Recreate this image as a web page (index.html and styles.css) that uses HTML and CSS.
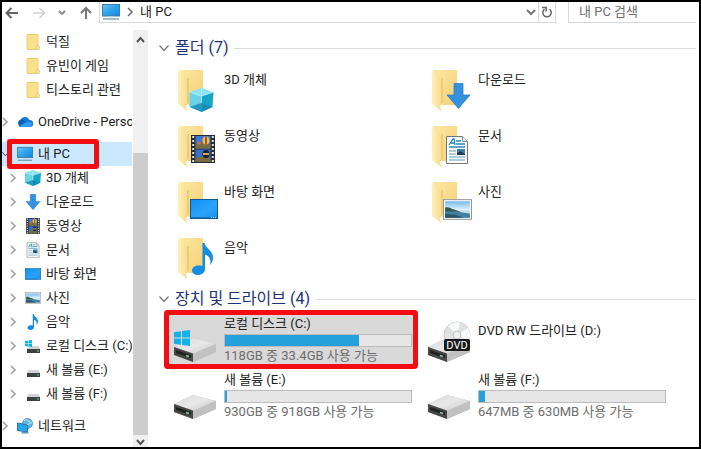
FILE: index.html
```html
<!DOCTYPE html>
<html lang="ko">
<head>
<meta charset="utf-8">
<meta name="viewport" content="width=device-width, initial-scale=1">
<title>내 PC</title>
<link rel="stylesheet" href="styles.css">
</head>
<body>
<svg class="defs" aria-hidden="true">
  <defs>
    <linearGradient id="blue" x1="0" y1="0" x2="1" y2="1"><stop offset="0" stop-color="#6cc4f5"/><stop offset=".5" stop-color="#2fa2ec"/><stop offset="1" stop-color="#1787dc"/></linearGradient>
    <linearGradient id="desk" x1="0" y1="0" x2="1" y2="1"><stop offset="0" stop-color="#0f8ff0"/><stop offset=".6" stop-color="#2ba3fa"/><stop offset="1" stop-color="#1190f0"/></linearGradient>
    <linearGradient id="gold" x1="0" y1="0" x2="1" y2="1"><stop offset="0" stop-color="#fde9a6"/><stop offset="1" stop-color="#f3cf72"/></linearGradient>
    <linearGradient id="flap" x1="0" y1="0" x2="1" y2="0"><stop offset="0" stop-color="#fff0bd"/><stop offset="1" stop-color="#f8da88"/></linearGradient>
    <linearGradient id="metal" x1="0" y1="0" x2="1" y2="1"><stop offset="0" stop-color="#dadada"/><stop offset=".5" stop-color="#e8e8e8"/><stop offset="1" stop-color="#c4c4c4"/></linearGradient>
    <linearGradient id="sky" x1="0" y1="0" x2="0" y2="1"><stop offset="0" stop-color="#79b9ea"/><stop offset=".5" stop-color="#dceffa"/><stop offset="1" stop-color="#7eb4d3"/></linearGradient>
    <symbol id="chev" viewBox="0 0 7 10"><path d="M1 1l4 4-4 4" fill="none" stroke="#a0a0a0" stroke-width="1.6"/></symbol>
    <symbol id="vee" viewBox="0 0 10 10"><path d="M0.500 2.500L5 7.500l4.500-5" fill="none" stroke="currentColor" stroke-width="1.200"/></symbol>
    <symbol id="folder-s" viewBox="0 0 16 16"><path d="M2 .5h11v11l1 1v3H2z" fill="#fbe08c" stroke="#e6c56a" stroke-width=".8"/><path d="M11 15.500l1.500-4 1.500 1v3z" fill="#fff0b8" stroke="#d9b65c" stroke-width=".6"/></symbol>
    <symbol id="pc" viewBox="0 0 18 16"><rect x=".5" y=".5" width="17" height="11.500" fill="url(#blue)" stroke="#3b7ea8"/><path d="M7 12.500h4v1H7z" fill="#b8dff2"/><path d="M1 15h16" stroke="#5e8da8" stroke-width="1.200"/></symbol>
    <symbol id="cloud" viewBox="0 0 16 16"><path d="M4 13a4 4 0 01-.3-7.500A5 5 0 0112.500 6a3.500 3.500 0 01.5 7z" fill="#1379d5"/><path d="M4 13a4 4 0 01-.3-7.500c2 0 4 1 5.300 2.300l4.800 4.900-.8.300z" fill="#0b5eb8"/><path d="M2 12.300l6.500-3.800c2-1 3.800-1 6 .2A3.300 3.300 0 0112.800 13H4z" fill="#2d9cee"/></symbol>
    <symbol id="cube" viewBox="0 0 24 24"><path d="M12 0l11 4-11 4L0 4z" fill="#8ae3f2"/><path d="M0 4l12 4v16L0 19z" fill="#69d3e8"/><path d="M12 8l12-4-1 15-11 5z" fill="#17a4c9"/><path d="M0 19l12-4 11 4-11 5z" fill="#0f87b0" opacity=".75"/><path d="M12 0v15M0 4l12 4 12-4" fill="none" stroke="#bdf3fa" stroke-width=".8"/></symbol>
    <symbol id="down" viewBox="0 0 24 26"><path d="M7.500.5h9V12H23.500L12 25.500.5 12h7z" fill="#3491df" stroke="#2279c5" stroke-width=".7"/></symbol>
    <symbol id="film" viewBox="0 0 24 28"><path d="M0 0h24v28H0z" fill="#262b3b"/><path d="M4.500 1h15v12.500h-15z" fill="#3b78d2"/><path d="M4.500 14.500h15V27h-15z" fill="#3c70c4"/><path d="M4.500 10c4-3 9-3 15-1v4.500h-15zM4.500 24c4-3 9-3 15-1v4h-15z" fill="#796d3e"/><ellipse cx="15" cy="5.500" rx="3.500" ry="4" fill="#e5c645"/><path d="M14 1.500h2v8h-2z" fill="#b7493c"/><circle cx="8" cy="8" r="1.800" fill="#db6741"/><ellipse cx="15" cy="19" rx="3.500" ry="4" fill="#191f34"/><path d="M12 18h6v2h-6z" fill="#cfaa45"/><path d="M2.200 1v26M21.800 1v26" stroke="#e9e5cf" stroke-width="2" stroke-dasharray="2 2"/></symbol>
    <symbol id="doc" viewBox="0 0 22 28"><path d="M.5.5h16l5 5v22H.5z" fill="#fff" stroke="#777"/><path d="M16.500.5v5h5" fill="#e9f3f7" stroke="#888"/><path d="M3 9l4-6h1l1 6M5 7h4M10 5h5M10 8h9M3 11h16" fill="none" stroke="#2388b9" stroke-width="1.300"/><path d="M3 15h7M3 18h7M3 21h16M3 24h16" stroke="#599bbd"/><path d="M11 13h8v6h-8z" fill="#397fa9"/><path d="M11 17l3-2 5 3v1h-8z" fill="#243f4b"/></symbol>
    <symbol id="desktop" viewBox="0 0 28 20"><rect x=".5" y=".5" width="27" height="19" fill="url(#desk)" stroke="#155991"/><path d="M1 18.500h26" stroke="#1176c5"/><path d="M21 18.500h5" stroke="#b9e5ff" stroke-dasharray="1 1"/></symbol>
    <symbol id="photo" viewBox="0 0 28 20"><rect x=".5" y=".5" width="27" height="19" fill="#fff" stroke="#969696"/><path d="M2 2h24v16H2z" fill="url(#sky)"/><path d="M2 8c4-1 5 1 9 2l7 3H2z" fill="#33584f"/><path d="M2 12h11l13 2v4H2z" fill="#4381a4"/><path d="M2 14l10 1 8 3H2z" fill="#2b5365"/></symbol>
    <symbol id="note" viewBox="0 0 22 32"><path d="M10.500 0h2c.5 5 9 8 8.500 15 0 3-2 6-3 7 1.500-6-1-9-5-10.500V26c0 3.500-3 6-7 6-3.500 0-6-2-6-4.500C0 24 4 22 8 22.500l2.500.5z" fill="#138de0"/></symbol>
    <symbol id="disk-s" viewBox="0 0 16 16"><path d="M3 8h11l1 3H2z" fill="#d4d4d4"/><path d="M2 11h13v4H2z" fill="#3c4142"/><path d="M12 13h2" stroke="#74cf86"/></symbol>
    <symbol id="win" viewBox="0 0 16 16"><path d="M0 2.200l7-1v6.300H0zM8 1l8-1v7.500H8zM0 8.500h7v6.300l-7-1zM8 8.500h8V16l-8-1z" fill="#12b1e8"/></symbol>
    <symbol id="disk-c" viewBox="0 0 16 16"><use href="#disk-s" width="16" height="16"/><use href="#win" x="0" y="2" width="7" height="7"/></symbol>
    <symbol id="net" viewBox="0 0 16 16"><circle cx="10.500" cy="5.500" r="5" fill="#5fb6dd" stroke="#3984ac" stroke-width=".7"/><path d="M7 3c3-3 3 1 6 0M10 7l5-3" fill="none" stroke="#c8edf7"/><path d="M.5 5l10 2v7l-10-1.500z" fill="#28a5e8" stroke="#237aad"/><path d="M4 15.500h8l-1-1.500H5z" fill="#5499bc"/></symbol>
    <symbol id="folder" viewBox="0 0 44 44"><path d="M5 1h24v35H14z" fill="url(#gold)"/><path d="M4 2l10 7v24l-2 2 1 7-9-7z" fill="url(#flap)"/><path d="M14 9v24l-2 3" fill="none" stroke="#e3bd62" stroke-width="1"/></symbol>
    <symbol id="disk" viewBox="0 0 44 24"><path d="M0 9L19 0l23 6v8L19 24 0 17z" fill="#bdbdbd"/><path d="M0 9L19 0l23 6-23 10z" fill="url(#metal)"/><path d="M0 9l19 6.500V24L0 17z" fill="#454847"/><path d="M2 12l15 5v3L2 15z" fill="#202322"/><path d="M19 16l23-10v8L19 24z" fill="#c1c1c1"/><path d="M12 17.500l3 1" stroke="#8cc99a" stroke-width="1.500"/></symbol>
  </defs>
</svg>
<div class="window">
  <header class="toolbar">
    <div class="history">
      <button type="button" aria-label="뒤로"><svg width="14" height="14" viewBox="0 0 14 14"><path d="M13 7H2M6.500 2L1.500 7l5 5" fill="none" stroke="#666" stroke-width="2"/></svg></button>
      <button type="button" aria-label="앞으로"><svg width="14" height="14" viewBox="0 0 14 14"><path d="M1 7h11M7.500 2l5 5-5 5" fill="none" stroke="#d2d2d2" stroke-width="1.500"/></svg></button>
      <button type="button" aria-label="최근 위치"><svg width="8" height="8" viewBox="0 0 8 8"><path d="M1 2l3 3 3-3" fill="none" stroke="#888" stroke-width="1.800"/></svg></button>
      <button type="button" aria-label="위로"><svg width="14" height="14" viewBox="0 0 14 14"><path d="M7 13V2M2 7l5-5 5 5" fill="none" stroke="#777" stroke-width="2"/></svg></button>
    </div>
    <div class="address">
      <svg class="address-icon"><use href="#pc"/></svg>
      <svg class="chevron dark"><use href="#chev"/></svg>
      <a class="crumb" href="#">내 PC</a>
      <button type="button" aria-label="이전 위치"><svg width="10" height="10" viewBox="0 0 10 10"><path d="M1 3l4 4 4-4" fill="none" stroke="#777" stroke-width="2"/></svg></button>
      <button type="button" class="refresh" aria-label="새로 고침"><svg width="12" height="12" viewBox="0 0 12 12"><path d="M8.500 3.200A4.200 4.200 0 113.500 3.200" fill="none" stroke="#666" stroke-width="1.500"/><path d="M1 1.500h4.200v4" fill="none" stroke="#666" stroke-width="1.500"/></svg></button>
    </div>
    <input class="search" type="text" aria-label="내 PC 검색" placeholder="내 PC 검색">
  </header>
  <div class="content">
    <nav class="tree" aria-label="탐색 창">
      <ul>
        <li><a class="row child" href="#"><span class="chevron"></span><svg class="icon"><use href="#folder-s"/></svg>덕질</a></li>
        <li><a class="row child" href="#"><span class="chevron"></span><svg class="icon"><use href="#folder-s"/></svg>유빈이 게임</a></li>
        <li><a class="row child" href="#"><span class="chevron"></span><svg class="icon"><use href="#folder-s"/></svg>티스토리 관련</a></li>
      </ul>
      <ul>
        <li><a class="row" href="#"><svg class="chevron"><use href="#chev"/></svg><svg class="icon"><use href="#cloud"/></svg>OneDrive - Personal</a></li>
      </ul>
      <ul>
        <li class="marked"><a class="row selected" href="#"><svg class="chevron"><use href="#vee"/></svg><svg class="icon"><use href="#pc"/></svg>내 PC</a></li>
        <li><a class="row child" href="#"><svg class="chevron"><use href="#chev"/></svg><svg class="icon"><use href="#cube"/></svg>3D 개체</a></li>
        <li><a class="row child" href="#"><svg class="chevron"><use href="#chev"/></svg><svg class="icon"><use href="#down"/></svg>다운로드</a></li>
        <li><a class="row child" href="#"><svg class="chevron"><use href="#chev"/></svg><svg class="icon"><use href="#film"/></svg>동영상</a></li>
        <li><a class="row child" href="#"><svg class="chevron"><use href="#chev"/></svg><svg class="icon"><use href="#doc"/></svg>문서</a></li>
        <li><a class="row child" href="#"><svg class="chevron"><use href="#chev"/></svg><svg class="icon"><use href="#desktop"/></svg>바탕 화면</a></li>
        <li><a class="row child" href="#"><svg class="chevron"><use href="#chev"/></svg><svg class="icon"><use href="#photo"/></svg>사진</a></li>
        <li><a class="row child" href="#"><svg class="chevron"><use href="#chev"/></svg><svg class="icon"><use href="#note"/></svg>음악</a></li>
        <li><a class="row child" href="#"><svg class="chevron"><use href="#chev"/></svg><svg class="icon"><use href="#disk-c"/></svg>로컬 디스크 (C:)</a></li>
        <li><a class="row child" href="#"><svg class="chevron"><use href="#chev"/></svg><svg class="icon"><use href="#disk-s"/></svg>새 볼륨 (E:)</a></li>
        <li><a class="row child" href="#"><svg class="chevron"><use href="#chev"/></svg><svg class="icon"><use href="#disk-s"/></svg>새 볼륨 (F:)</a></li>
      </ul>
      <ul>
        <li><a class="row" href="#"><svg class="chevron"><use href="#chev"/></svg><svg class="icon"><use href="#net"/></svg>네트워크</a></li>
      </ul>
    </nav>
    <div class="scrollbar" aria-hidden="true">
      <svg width="9" height="9" viewBox="0 0 9 9"><path d="M1 7l3.500-4L8 7" fill="none" stroke="#555" stroke-width="2"/></svg>
      <div class="track"><div class="thumb"></div></div>
      <svg width="9" height="9" viewBox="0 0 9 9"><path d="M1 2l3.500 4L8 2" fill="none" stroke="#555" stroke-width="2"/></svg>
    </div>
    <main>
      <h2><svg><use href="#vee"/></svg>폴더 (7)</h2>
      <div class="grid folders">
        <a class="tile" href="#"><svg class="big" viewBox="0 0 44 44"><use href="#folder"/><use href="#cube" x="15" y="19" width="25" height="24"/></svg>3D 개체</a>
        <a class="tile" href="#"><svg class="big" viewBox="0 0 44 44"><use href="#folder"/><use href="#down" x="18" y="14" width="25" height="26"/></svg>다운로드</a>
        <a class="tile" href="#"><svg class="big" viewBox="0 0 44 44"><use href="#folder"/><use href="#film" x="16" y="10" width="26" height="28"/></svg>동영상</a>
        <a class="tile" href="#"><svg class="big" viewBox="0 0 44 44"><use href="#folder"/><use href="#doc" x="18" y="11" width="22" height="28"/></svg>문서</a>
        <a class="tile" href="#"><svg class="big" viewBox="0 0 44 44"><use href="#folder"/><use href="#desktop" x="16" y="18" width="28" height="20"/></svg>바탕 화면</a>
        <a class="tile" href="#"><svg class="big" viewBox="0 0 44 44"><use href="#folder"/><use href="#photo" x="15" y="18" width="29" height="21"/></svg>사진</a>
        <a class="tile" href="#"><svg class="big" viewBox="0 0 44 44"><use href="#folder"/><use href="#note" x="18" y="6" width="22" height="32"/></svg>음악</a>
      </div>
      <h2><svg><use href="#vee"/></svg>장치 및 드라이브 (4)</h2>
      <div class="grid drives">
        <a class="tile active" href="#"><svg class="big" viewBox="0 0 44 48"><use href="#disk" y="23" width="44" height="24"/><use href="#win" y="15" width="16" height="16"/></svg><span class="info"><span>로컬 디스크 (C:)</span><progress max="100" value="72" aria-label="C: 사용량"></progress><small>118GB 중 33.4GB 사용 가능</small></span></a>
        <a class="tile" href="#"><svg class="big" viewBox="0 0 44 48"><use href="#disk" y="23" width="44" height="24"/><circle cx="29" cy="20" r="13" fill="#dfe3e2" stroke="#bbc0bf" stroke-width=".7"/><path d="M29 20l-9-9a13 13 0 0112-3.500zM29 20l12 5a13 13 0 00-1-12z" fill="#f8faf9"/><circle cx="29" cy="20" r="4" fill="#eef2f0" stroke="#aaa" stroke-width=".7"/><rect x="16" y="24" width="26" height="12" rx="2" fill="#171819"/><text x="29" y="34" class="disc-label">DVD</text></svg><span class="info plain"><span>DVD RW 드라이브 (D:)</span></span></a>
        <a class="tile" href="#"><svg class="big" viewBox="0 0 44 48"><use href="#disk" y="24" width="44" height="24"/></svg><span class="info"><span>새 볼륨 (E:)</span><progress max="100" value="1" aria-label="E: 사용량"></progress><small>930GB 중 918GB 사용 가능</small></span></a>
        <a class="tile" href="#"><svg class="big" viewBox="0 0 44 48"><use href="#disk" y="24" width="44" height="24"/></svg><span class="info"><span>새 볼륨 (F:)</span><progress max="100" value="3" aria-label="F: 사용량"></progress><small>647MB 중 630MB 사용 가능</small></span></a>
      </div>
    </main>
  </div>
</div>
</body>
</html>
```

FILE: styles.css
```css
*,
*::before,
*::after { box-sizing: border-box; }

body {
  margin: 0;
  background: #fff;
  color: #222;
  font: 13px/18px Roboto, "Noto Sans CJK KR", sans-serif;
}

a { color: inherit; text-decoration: none; }
svg { display: block; flex: none; }
.defs { position: absolute; width: 0; height: 0; }

button {
  display: flex;
  align-items: center;
  justify-content: center;
  padding: 0;
  border: 0;
  background: none;
}

.window {
  display: flex;
  flex-direction: column;
  min-height: 100vh;
  border: 2px solid #000;
}

/* Toolbar */
.toolbar {
  display: flex;
  height: 21px;
  padding-right: 3px;
}

.history {
  display: flex;
  align-items: center;
  justify-content: space-between;
  width: 97px;
  padding: 0 6px 0 3px;
}

.address {
  display: flex;
  flex: 1;
  align-items: center;
  border: solid #d9d9d9;
  border-width: 0 1px 1px;
}

.address-icon { width: 18px; height: 16px; margin: 0 7px 0 2px; }
.address .chevron { margin-right: 6px; }
.dark { filter: brightness(0.7); }
.crumb { flex: 1; }

.refresh {
  align-self: stretch;
  width: 17px;
  margin-left: 2px;
  border-left: 1px solid #d9d9d9;
}

.search {
  width: 128px;
  margin-left: 12px;
  padding: 0 10px;
  border: solid #d9d9d9;
  border-width: 0 0 1px 1px;
  background: #fff;
  font: inherit;
}

.search::placeholder { color: #6d6d6d; opacity: 1; }

.content {
  display: grid;
  flex: 1;
  grid-template-columns: 131px 15px 1fr;
  padding-top: 7px;
}

/* Navigation tree */
.tree { min-width: 0; }

.tree ul {
  margin: 0 0 8px;
  padding: 0;
  list-style: none;
}

.row {
  display: flex;
  align-items: center;
  height: 24px;
  margin-right: 1px;
  overflow: hidden;
  white-space: nowrap;
}

.child { padding-left: 8px; }
.selected { background: #cce8ff; }
.chevron { flex: none; width: 7px; height: 10px; }
.row .icon { width: 16px; height: 16px; margin: 0 5px 0 8px; }

.marked { position: relative; }

.marked::after {
  content: "";
  position: absolute;
  top: -3px;
  left: 5px;
  width: 92px;
  height: 30px;
  border: 5px solid #f20d12;
  border-radius: 3px;
}

/* Scroll bar */
.scrollbar {
  display: flex;
  flex-direction: column;
  align-items: center;
  padding: 5px 0 0;
  background: #f0f0f0;
}

.track {
  display: flex;
  flex: 1;
  flex-direction: column;
  justify-content: flex-end;
  align-self: stretch;
  padding-bottom: 3px;
}

.thumb { height: 72%; background: #cdcdcd; }

/* File area */
main { padding: 6px 3px 8px 11px; }

h2 {
  display: flex;
  align-items: center;
  gap: 6px;
  margin: 0;
  color: #1e3278;
  font-size: 16px;
  font-weight: 400;
  line-height: 24px;
}

h2 svg { width: 10px; height: 10px; color: #777; }

h2::after {
  content: "";
  flex: 1;
  height: 1px;
  background: #dcdcdc;
}

.grid {
  display: grid;
  grid-template-columns: repeat(auto-fill, 244px);
  column-gap: 10px;
  padding-left: 10px;
}

.folders { grid-auto-rows: 56px; padding-top: 9px; margin-bottom: -6px; }
.drives { grid-auto-rows: 49px; row-gap: 7px; padding-top: 4px; }

.tile {
  display: flex;
  gap: 6px;
  padding-left: 5px;
}

.folders .tile { line-height: 22px; }
.folders .big { width: 44px; height: 44px; }
.drives .big { width: 44px; height: 48px; }
.disc-label { fill: #fff; font-size: 11px; text-anchor: middle; }

.active {
  background: #d9d9d9;
  border-radius: 1px;
  box-shadow: 0 0 0 5px #f20d12;
}

.info {
  display: flex;
  flex: 1;
  flex-direction: column;
  margin-right: 1px;
}

.plain { padding-top: 7px; }
.info small { color: #6d6d6d; font-size: 13px; line-height: 16px; }

progress {
  width: 100%;
  height: 13px;
  margin: 1px 0;
  border: 1px solid #bcbcbc;
  background: #e6e6e6;
  appearance: none;
}

progress::-webkit-progress-bar { background: #e6e6e6; }
progress::-webkit-progress-value { background: #26a0da; }
```
